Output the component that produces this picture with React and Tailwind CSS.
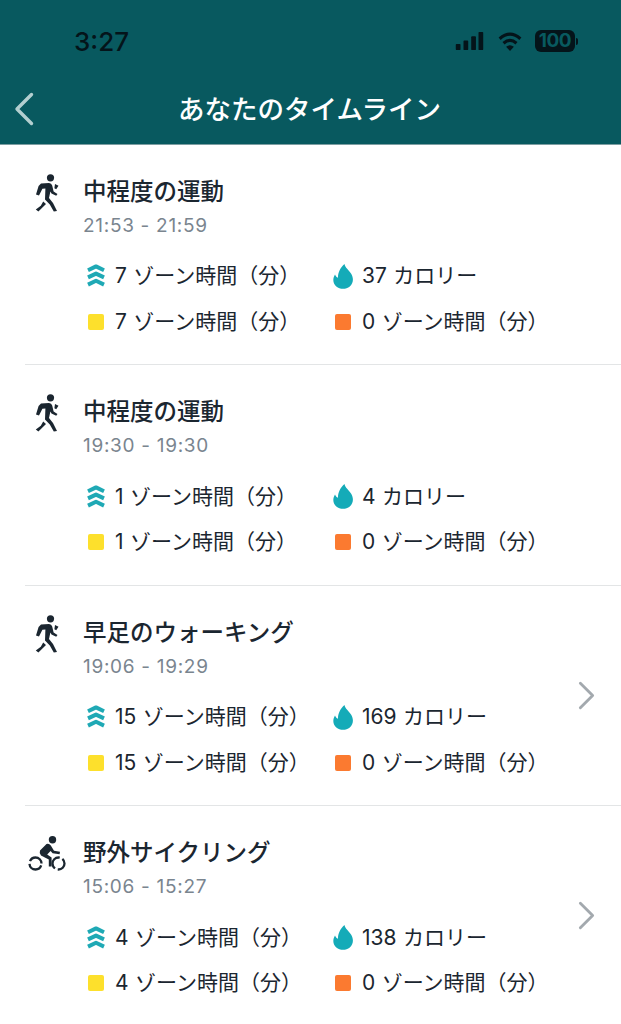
const cjk = 'font-["Inter","Noto_Sans_CJK_JP",sans-serif]';

const entries = [
  { icon: 'walk', title: '中程度の運動', time: '21:53 - 21:59', zone: 7, cal: 37 },
  { icon: 'walk', title: '中程度の運動', time: '19:30 - 19:30', zone: 1, cal: 4 },
  { icon: 'walk', title: '早足のウォーキング', time: '19:06 - 19:29', zone: 15, cal: 169, more: true },
  { icon: 'bike', title: '野外サイクリング', time: '15:06 - 15:27', zone: 4, cal: 138, more: true },
];

function WalkIcon() {
  return (
    <svg width="24" height="38" viewBox="0 0 24 38" fill="#1b2630">
      <circle cx="15.5" cy="3.8" r="3.6" />
      <path d="M6 9.5 L14 9 Q16.5 9 17.2 11.5 L18.6 17.5 L22.5 20 L21.2 21.8 L16.5 19.5 L15.4 17.5 L14 24 L18 29 L22 37 L18.8 37.6 L14.8 30.5 L10 25.5 L10.4 14.5 L7.4 14.8 L4 21.5 L1 20.6 L3.6 12 Z" />
      <path d="M8.2 27.4 L11 30 L3.4 37.6 L0.8 35.6 L5.8 31.8 Z" />
      <path d="M20 10 L23.5 11.8 L21.2 15.2 L19.4 14.2 Z" />
    </svg>
  );
}

function BikeIcon() {
  return (
    <svg width="38" height="35" viewBox="0 0 38 35" fill="none">
      <circle cx="24.5" cy="3.8" r="3.7" fill="#1b2630" />
      <path d="M12 14.5 L18.5 8 Q21 7 22.8 9.5 L26 14.8 L32 15.8 L31.6 18.2 L24.6 17.2 L22.6 15 L19.2 18.5 L23.6 21.5 L23.6 30.5 L20.8 30.5 L20.8 23.5 L13 19.5 Q11 17 12 14.5 Z" fill="#1b2630" />
      <circle cx="7.5" cy="27.5" r="6" stroke="#1b2630" strokeWidth="2.3" strokeDasharray="16 2.85" strokeDashoffset="-2" />
      <circle cx="30.5" cy="27.5" r="6" stroke="#1b2630" strokeWidth="2.3" strokeDasharray="16 2.85" strokeDashoffset="6" />
    </svg>
  );
}

function ZoneIcon() {
  return (
    <svg width="18" height="24" viewBox="0 0 18 24" fill="none" stroke="#1fa9b5" strokeWidth="4" strokeLinejoin="round">
      <path d="M1 6.2 L9 2.4 L17 6.2" />
      <path d="M1 13.4 L9 9.6 L17 13.4" />
      <path d="M1 20.6 L9 16.8 L17 20.6" />
    </svg>
  );
}

function FlameIcon() {
  return (
    <svg width="20" height="25" viewBox="0 0 20 25" fill="#14abb8">
      <path d="M11.5 0 C12 3.5 16 6 18.2 9.8 C20.8 14.5 20.5 19.2 16.8 22.5 C13 25.6 7 25.6 3.3 22.5 C-0.2 19.5 -0.6 14.8 2 10.5 C2.6 12 3.5 13.2 5 13.8 C4.8 8.5 7.5 3.5 11.5 0 Z" />
    </svg>
  );
}

function Stat({ icon, children }) {
  return (
    <div className="flex items-center">
      <div className="flex w-[24px] shrink-0 justify-center">{icon}</div>
      <span className="ml-[7px] whitespace-nowrap text-[21px] leading-[28px] text-[#1b2630] [word-spacing:0.5px]">{children}</span>
    </div>
  );
}

function Entry({ entry, last }) {
  return (
    <div className={`ml-[25px] flex h-[220.5px] ${last ? '' : 'border-b border-[#e3e5e6]'}`}>
      <div className="w-[58px] shrink-0 pt-[29px]">
        <div className="flex w-[44px] justify-center">
          {entry.icon === 'walk' ? <WalkIcon /> : <div className="pt-[1px]"><BikeIcon /></div>}
        </div>
      </div>
      <div className="flex-1 pt-[31px]">
        <div className="text-[23.5px] leading-[32px] font-medium text-[#1b2630]">{entry.title}</div>
        <div className="mt-[5px] text-[19px] leading-[26px] tracking-[0.7px] text-[#7a858f]">{entry.time}</div>
        <div className="mt-[23.5px] grid grid-cols-[247px_1fr] gap-y-[17.5px] pl-[1px]">
          <Stat icon={<ZoneIcon />}>{entry.zone} ゾーン時間（分）</Stat>
          <Stat icon={<FlameIcon />}>{entry.cal} カロリー</Stat>
          <Stat icon={<div className="h-[16px] w-[16px] rounded-[2px] bg-[#fde02c]" />}>{entry.zone} ゾーン時間（分）</Stat>
          <Stat icon={<div className="h-[16px] w-[16px] rounded-[2px] bg-[#fb7a30]" />}>0 ゾーン時間（分）</Stat>
        </div>
      </div>
      <div className="flex w-[43px] shrink-0 pt-[95px]">
        {entry.more && (
          <svg width="17" height="29" viewBox="0 0 18 30" fill="none" stroke="#a3a9ae" strokeWidth="3" strokeLinecap="round" strokeLinejoin="round">
            <path d="M2.5 2 L15.5 15 L2.5 28" />
          </svg>
        )}
      </div>
    </div>
  );
}

export default function App() {
  return (
    <div className={`h-[1024px] w-[621px] overflow-hidden bg-white ${cjk}`}>
      <header className="h-[144.5px] border-b border-[#7d9ea2] bg-[#08595f]">
        <div className="flex h-[82px] items-center justify-between pr-[43px] pl-[74px]">
          <span className="text-[26px] font-medium text-[#04141a]">3:27</span>
          <div className="flex items-center gap-[12px]">
            <svg width="31" height="18" viewBox="0 0 32 21" fill="#04141a">
              <rect x="0" y="14" width="5.5" height="7" rx="1" />
              <rect x="9" y="10" width="5.5" height="11" rx="1" />
              <rect x="18" y="5" width="5.5" height="16" rx="1" />
              <rect x="26.5" y="0" width="5.5" height="21" rx="1" />
            </svg>
            <svg width="26" height="19" viewBox="0 0 26 22" fill="none" stroke="#04141a" strokeWidth="3.6">
              <path d="M1 7.8 Q13 -2.8 25 7.8" />
              <path d="M5.5 13 Q13 6.5 20.5 13" />
              <path d="M8.5 17 L13 22 L17.5 17 Q13 13.5 8.5 17 Z" fill="#04141a" stroke="none" />
            </svg>
            <div className="flex items-center">
              <div className="flex h-[22px] w-[40px] items-center justify-center rounded-[6px] bg-[#04141a] text-[19px] font-bold tracking-[-0.5px] text-[#08595f]">100</div>
              <div className="ml-[1px] h-[7px] w-[2px] rounded-r-[2px] bg-[#04141a]" />
            </div>
          </div>
        </div>
        <div className="grid h-[54px] grid-cols-[1fr_auto_1fr] items-center pr-[2px]">
          <svg className="ml-[14px]" width="20" height="34" viewBox="0 0 20 34" fill="none" stroke="#b3cfd0" strokeWidth="3.4" strokeLinecap="round" strokeLinejoin="round">
            <path d="M17.5 2.5 L3 17 L17.5 31.5" />
          </svg>
          <h1 className="text-[26.5px] leading-[36px] font-medium text-white">あなたのタイムライン</h1>
          <div />
        </div>
      </header>
      <main>
        {entries.map((entry, i) => (
          <Entry key={i} entry={entry} last={i === entries.length - 1} />
        ))}
      </main>
    </div>
  );
}
